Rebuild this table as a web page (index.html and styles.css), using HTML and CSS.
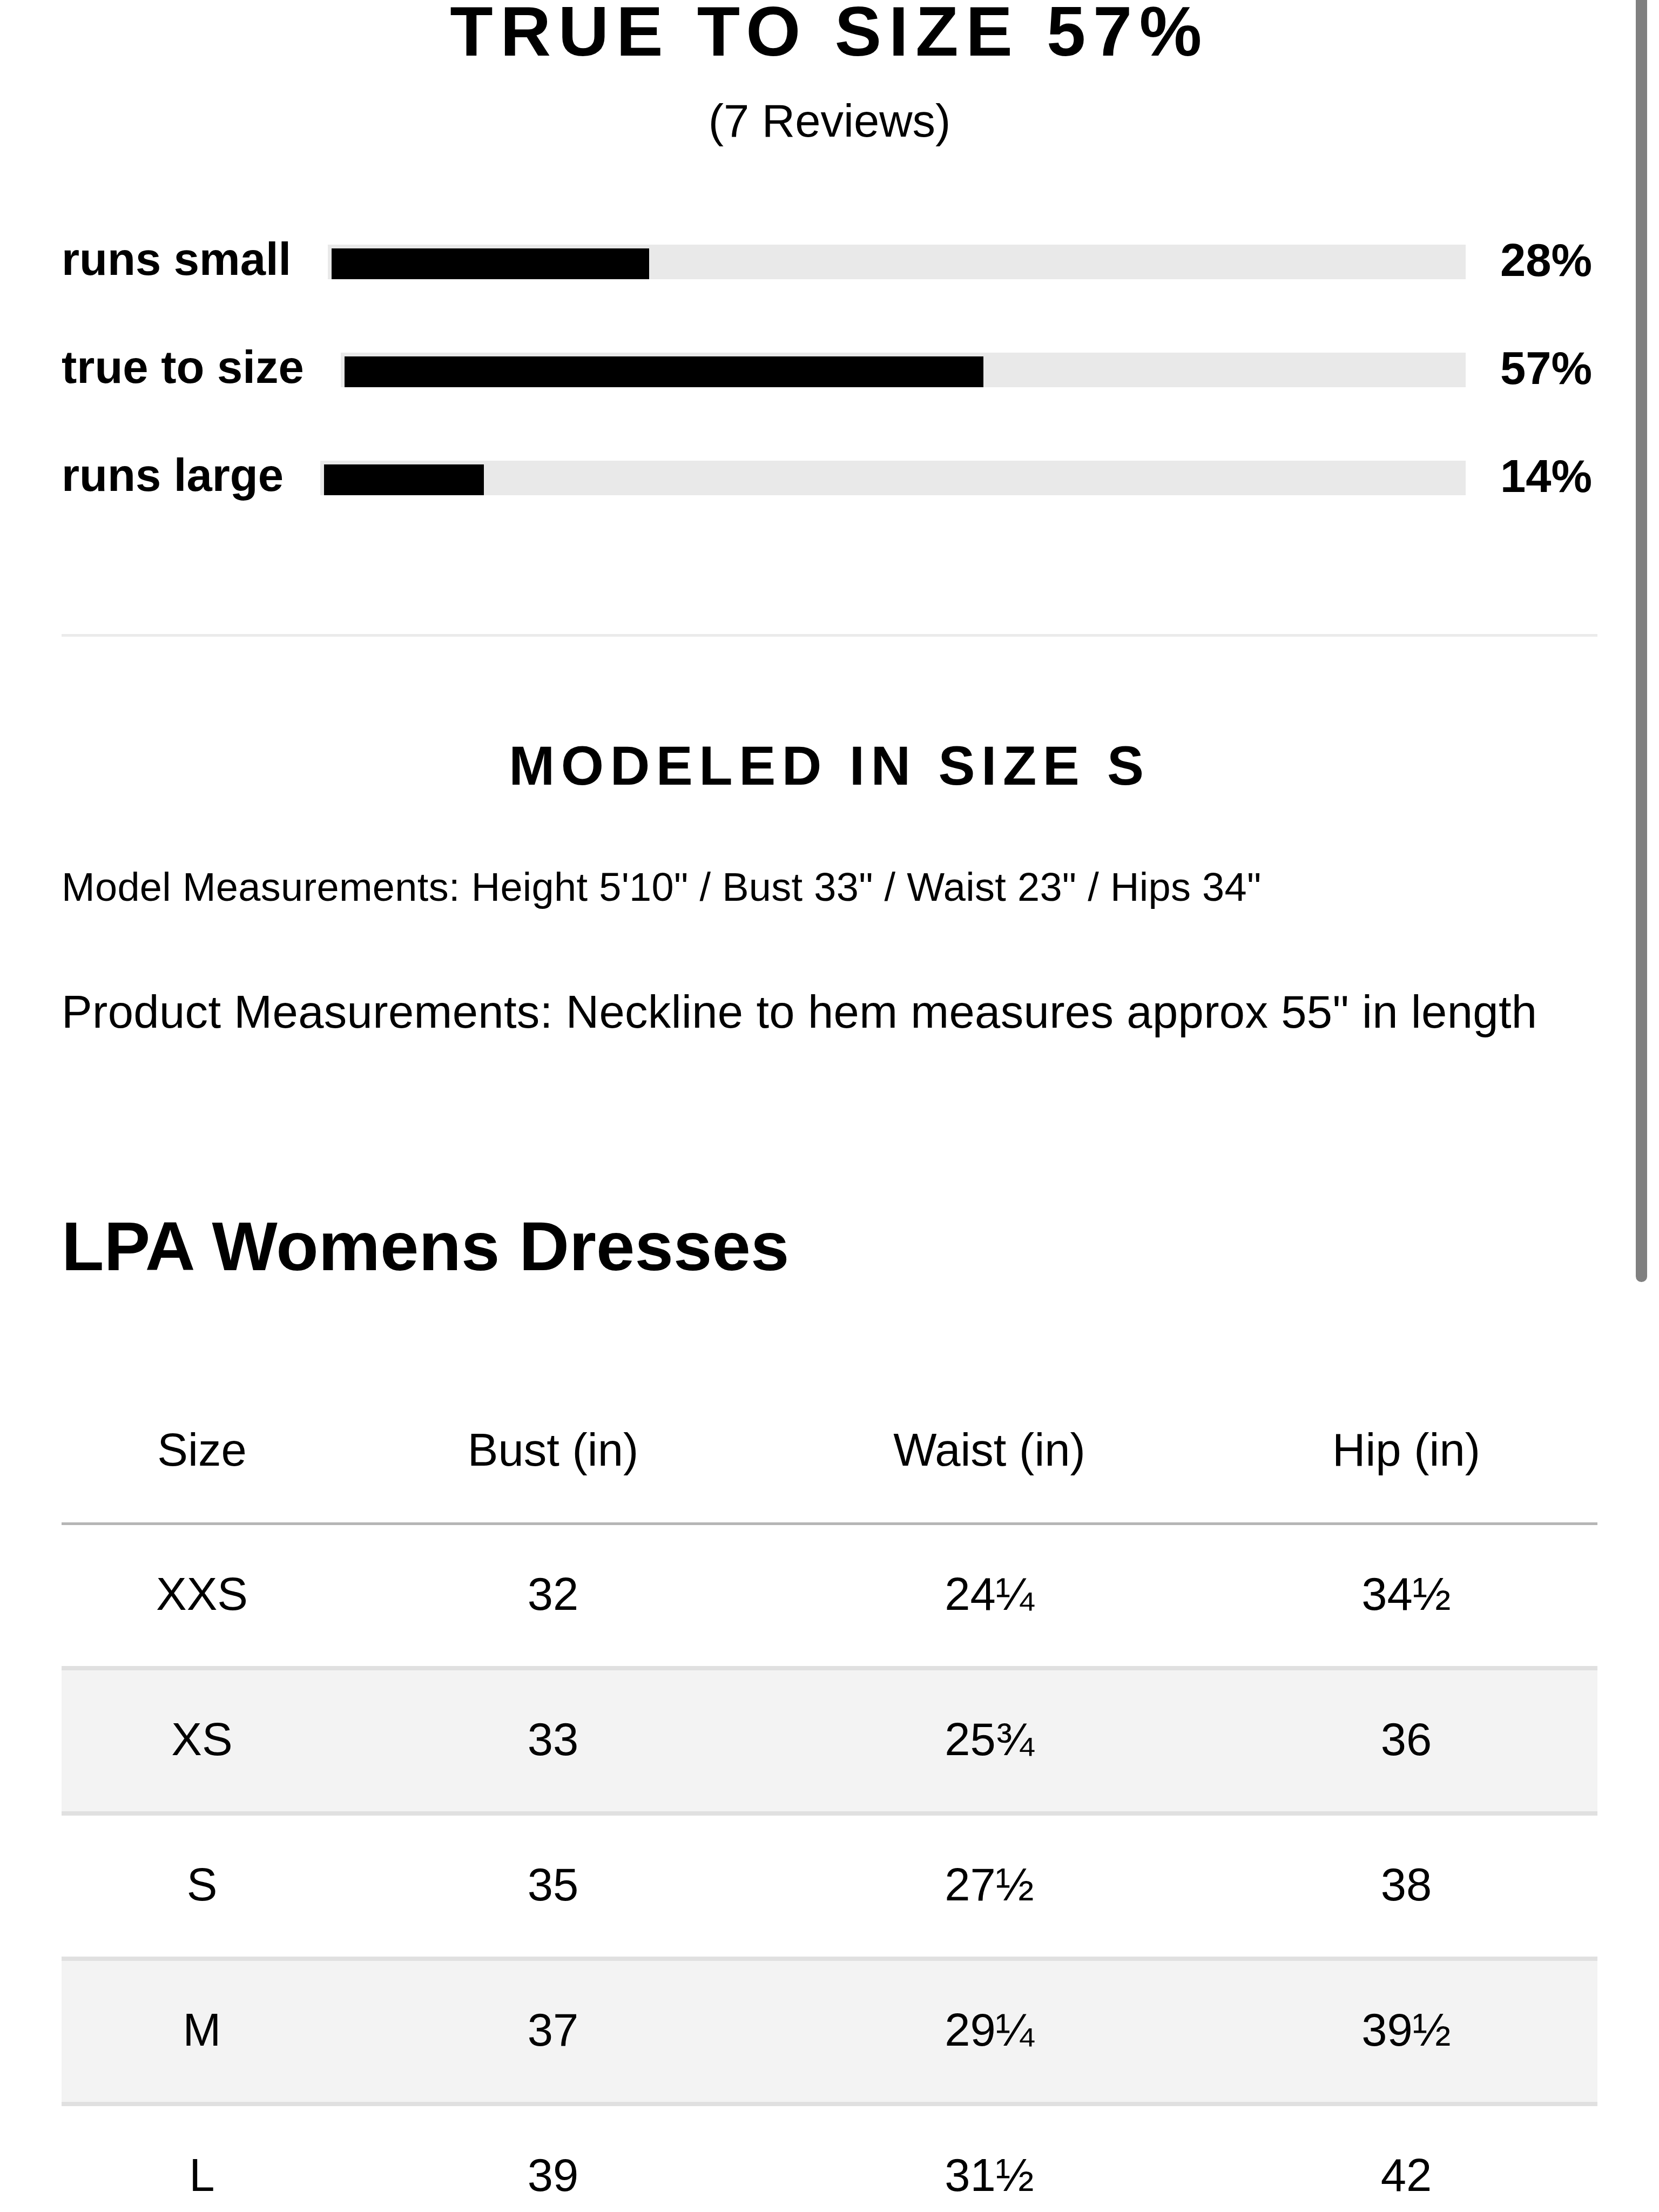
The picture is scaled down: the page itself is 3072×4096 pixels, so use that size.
FILE: index.html
```html
<!DOCTYPE html>
<html lang="en">
<head>
<meta charset="utf-8">
<title>Size &amp; Fit</title>
<link rel="stylesheet" href="styles.css">
</head>
<body>
<div class="page">
  <header class="fit-summary">
    <h1 class="fit-title">TRUE TO SIZE 57%</h1>
    <p class="fit-reviews">(7 Reviews)</p>
  </header>

  <div class="fit-bars">
    <div class="fit-row">
      <span class="fit-label">runs small</span>
      <div class="fit-track"><div class="fit-fill" style="width:28%"></div></div>
      <span class="fit-pct">28%</span>
    </div>
    <div class="fit-row">
      <span class="fit-label">true to size</span>
      <div class="fit-track"><div class="fit-fill" style="width:57%"></div></div>
      <span class="fit-pct">57%</span>
    </div>
    <div class="fit-row">
      <span class="fit-label">runs large</span>
      <div class="fit-track"><div class="fit-fill" style="width:14%"></div></div>
      <span class="fit-pct">14%</span>
    </div>
  </div>

  <hr class="divider">

  <h2 class="modeled">MODELED IN SIZE S</h2>
  <p class="model-meas">Model Measurements: Height 5'10" / Bust 33" / Waist 23" / Hips 34"</p>
  <p class="product-meas">Product Measurements: Neckline to hem measures approx 55" in length</p>

  <h2 class="chart-title">LPA Womens Dresses</h2>

  <div class="size-table">
    <div class="st-row st-head">
      <div class="st-cell">Size</div>
      <div class="st-cell">Bust (in)</div>
      <div class="st-cell">Waist (in)</div>
      <div class="st-cell">Hip (in)</div>
    </div>
    <div class="st-row">
      <div class="st-cell">XXS</div>
      <div class="st-cell">32</div>
      <div class="st-cell">24¼</div>
      <div class="st-cell">34½</div>
    </div>
    <div class="st-row st-alt">
      <div class="st-cell">XS</div>
      <div class="st-cell">33</div>
      <div class="st-cell">25¾</div>
      <div class="st-cell">36</div>
    </div>
    <div class="st-row">
      <div class="st-cell">S</div>
      <div class="st-cell">35</div>
      <div class="st-cell">27½</div>
      <div class="st-cell">38</div>
    </div>
    <div class="st-row st-alt">
      <div class="st-cell">M</div>
      <div class="st-cell">37</div>
      <div class="st-cell">29¼</div>
      <div class="st-cell">39½</div>
    </div>
    <div class="st-row">
      <div class="st-cell">L</div>
      <div class="st-cell">39</div>
      <div class="st-cell">31½</div>
      <div class="st-cell">42</div>
    </div>
  </div>
</div>
<div class="scrollbar"></div>
</body>
</html>
```

FILE: styles.css
```css
html, body {
  margin: 0;
  padding: 0;
  height: 4096px;
  overflow: hidden;
  background: #ffffff;
}

body {
  position: relative;
  font-family: "Liberation Sans", Arial, Helvetica, sans-serif;
  color: #000000;
}

.page {
  width: 2844px;
  margin-left: 114px;
}

/* ---------- fit summary ---------- */
.fit-title {
  margin: 0;
  font-size: 130px;
  line-height: 116px;
  font-weight: 700;
  letter-spacing: 13.5px;
  text-align: center;
}

.fit-reviews {
  margin: 57.5px 0 0;
  font-size: 85px;
  line-height: 100px;
  text-align: center;
}

.fit-bars {
  margin-top: 179px;
  padding-right: 10px;
  display: flex;
  flex-direction: column;
  gap: 136px;
}

.fit-row {
  display: flex;
  align-items: flex-start;
  height: 64px;
}

.fit-label {
  flex: none;
  font-size: 85px;
  line-height: 54px;
  font-weight: 700;
  white-space: nowrap;
}

.fit-track {
  flex: 1;
  height: 64px;
  box-sizing: border-box;
  margin-left: 68px;
  padding: 7px 0 0 7px;
  background: #e9e9e9;
}

.fit-fill {
  height: 57px;
  background: #000000;
}

.fit-pct {
  flex: none;
  width: 234px;
  font-size: 85px;
  line-height: 58px;
  font-weight: 700;
  text-align: right;
}

.divider {
  margin: 257.5px 0 0;
  border: 0;
  height: 5px;
  background: #ebebeb;
}

/* ---------- model info ---------- */
.modeled {
  margin: 188px 0 0;
  font-size: 102px;
  line-height: 102px;
  font-weight: 700;
  letter-spacing: 11.5px;
  text-align: center;
}

.model-meas {
  margin: 136.7px 0 0;
  font-size: 74px;
  line-height: 74px;
  letter-spacing: 0.3px;
  white-space: nowrap;
}

.product-meas {
  margin: 151.7px 0 0;
  font-size: 85px;
  line-height: 85px;
  letter-spacing: 0.35px;
  white-space: nowrap;
}

.chart-title {
  margin: 328.5px 0 0;
  font-size: 128.5px;
  line-height: 125px;
  font-weight: 700;
}

/* ---------- size table ---------- */
.size-table {
  margin-top: 272.1px;
}

.st-row {
  display: grid;
  grid-template-columns: 520px 780px 836px 708px;
  align-items: center;
  height: 255px;
  padding-bottom: 6px;
  border-bottom: 8px solid #e0e0e0;
  font-size: 85px;
  line-height: 85px;
}

.st-head {
  height: auto;
  padding-bottom: 92px;
  border-bottom: 5px solid #b5b5b5;
}

.st-alt {
  background: #f3f3f3;
}

.st-cell {
  text-align: center;
  white-space: nowrap;
}

/* ---------- overlay scrollbar ---------- */
.scrollbar {
  position: absolute;
  left: 3029px;
  top: -30px;
  width: 21px;
  height: 2404px;
  border-radius: 11px;
  background: #808080;
}
```
